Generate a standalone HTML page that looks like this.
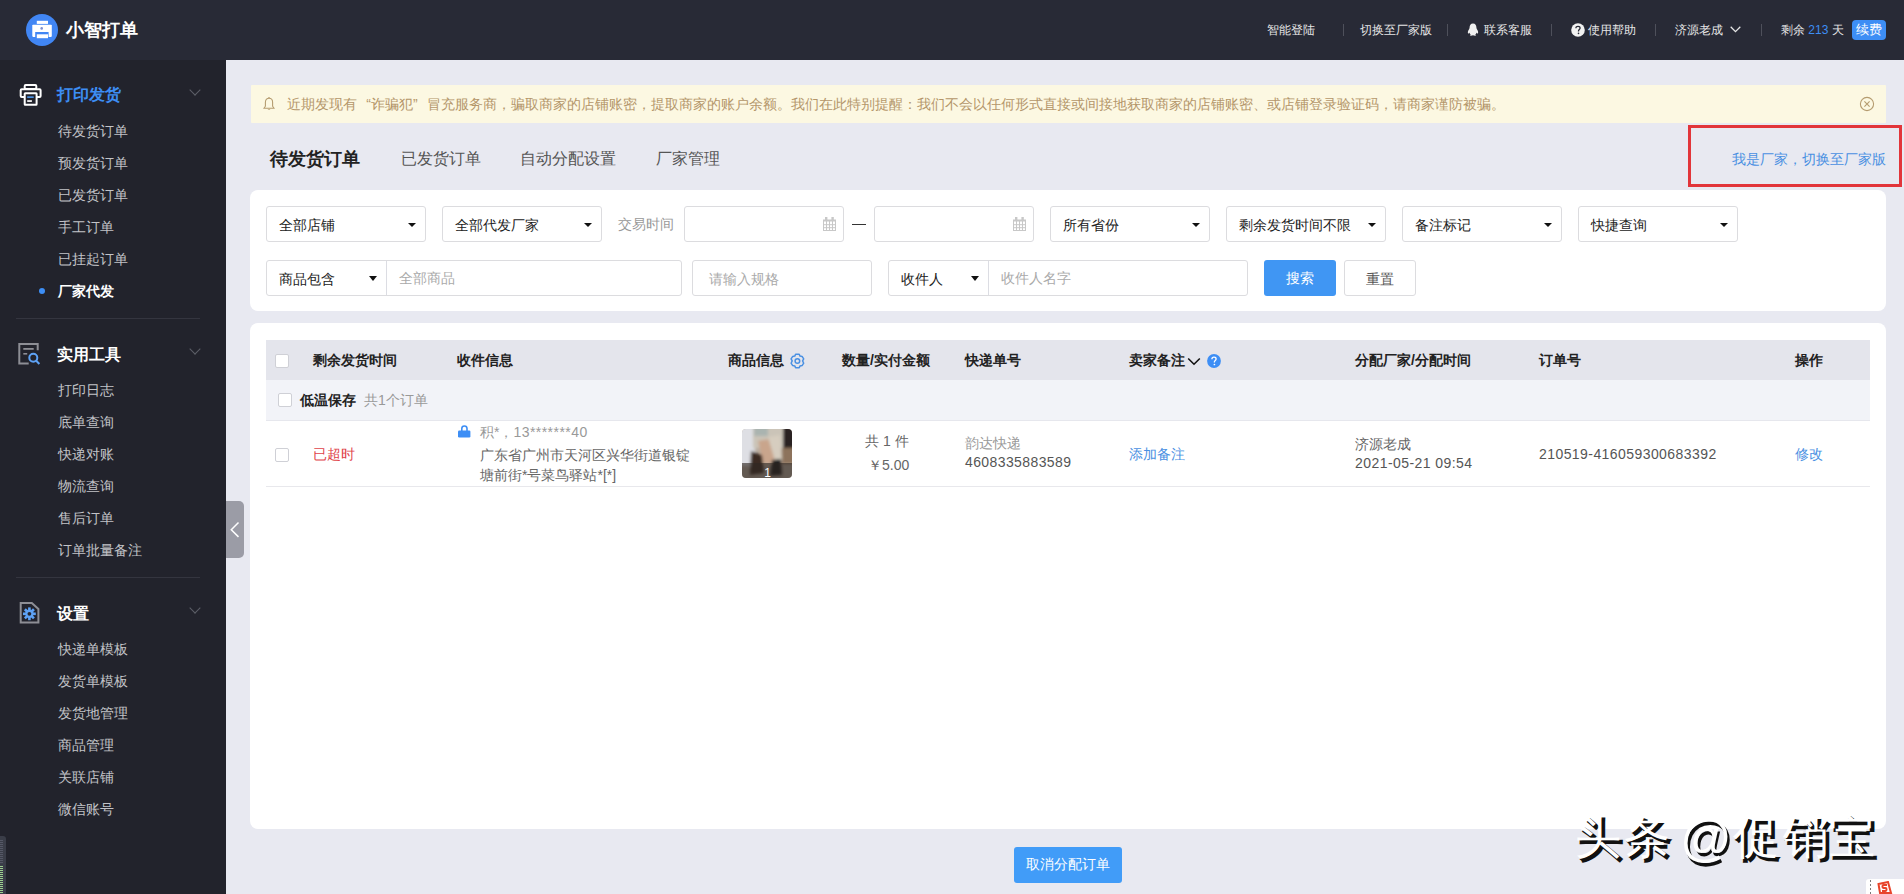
<!DOCTYPE html>
<html><head><meta charset="utf-8">
<style>
*{margin:0;padding:0;box-sizing:border-box}
html,body{width:1904px;height:894px;overflow:hidden}
body{font-family:"Liberation Sans",sans-serif;background:#e8e9f1;position:relative;font-size:14px;color:#333}
.a{position:absolute;white-space:nowrap;line-height:1}
#hdr{position:absolute;left:0;top:0;width:1904px;height:60px;background:#282a36}
#side{position:absolute;left:0;top:60px;width:226px;height:834px;background:#22232c}
.hi{color:#e6e6e6;font-size:12px}
.sep{position:absolute;width:1px;height:12px;background:#4e505b;top:24px}
.sub{color:#c2c3c8;font-size:14px;left:58px}
.sect{color:#fff;font-size:16px;font-weight:bold;left:57px}
.chev{position:absolute;left:191px;width:8px;height:8px;border-right:1.3px solid #5d5f69;border-bottom:1.3px solid #5d5f69;transform:rotate(45deg)}
.hline{position:absolute;left:16px;width:184px;height:1px;background:#34353f}
.card{position:absolute;background:#fff;border-radius:8px}
.sel{position:absolute;height:36px;border:1px solid #dcdcdf;border-radius:3px;background:#fff}
.sel span{position:absolute;left:12px;top:11px;font-size:14px;line-height:14px;color:#222}
.sel i{position:absolute;right:9px;top:16px;width:0;height:0;border-left:4.5px solid transparent;border-right:4.5px solid transparent;border-top:4.5px solid #111}
.ph{color:#a9a9a9}
.th{font-weight:bold;font-size:14px;color:#222}
.q{display:inline-block;width:14px;text-align-last:auto}
.cal{position:absolute;left:138px;top:10px;width:13px;height:14px;background:linear-gradient(90deg,#c8c8c8 1px,transparent 1px) 0 0/3.1px 100%,linear-gradient(#c8c8c8 1px,transparent 1px) 0 3px/100% 3.5px}
.wm{font-size:46px}
.cb{position:absolute;width:14px;height:14px;border:1px solid #cfd0d6;background:#fff;border-radius:2px}
</style></head><body>
<div id="hdr">
  <svg class="a" style="left:26px;top:14px" width="32" height="32" viewBox="0 0 32 32">
    <circle cx="16" cy="16" r="16" fill="#4186f4"></circle>
    <rect x="10.8" y="6.8" width="11.2" height="3.1" fill="#fff"></rect>
    <rect x="6.3" y="10.8" width="19.5" height="12.1" rx="0.8" fill="#fff"></rect>
    <rect x="9.2" y="18" width="13.4" height="6" fill="#4186f4"></rect>
    <rect x="10.8" y="20.3" width="11.2" height="3.9" fill="#fff"></rect>
    <circle cx="15.7" cy="14.4" r="1.3" fill="#7d8fd0"></circle>
  </svg>
  <div class="a" style="left: 66px; top: 21px; font-size: 18px; font-weight: bold; color: rgb(255, 255, 255); width: 72px; text-align-last: justify;">小智打单</div>
  <div class="a hi" style="left: 1267px; top: 24px; width: 48px; text-align-last: justify;">智能登陆</div>
  <div class="sep" style="left:1343px"></div>
  <div class="a hi" style="left: 1360px; top: 24px; width: 72px; text-align-last: justify;">切换至厂家版</div>
  <div class="sep" style="left:1447px"></div>
  <svg class="a" style="left:1467px;top:23px" width="12" height="13" viewBox="0 0 12 13">
    <path d="M6 0.5C3.6 0.5 2.6 2.4 2.6 4.4C2.6 5.2 2.2 6 1.6 7C0.8 8.3 0.6 9.8 1.2 10.4C1.6 10.8 2.2 10 2.5 9.4C2.7 10.6 3.3 11.3 3.9 11.7C2.9 12 2.6 12.5 3.2 12.6C4.4 12.8 5.4 12.4 6 12.2C6.6 12.4 7.6 12.8 8.8 12.6C9.4 12.5 9.1 12 8.1 11.7C8.7 11.3 9.3 10.6 9.5 9.4C9.8 10 10.4 10.8 10.8 10.4C11.4 9.8 11.2 8.3 10.4 7C9.8 6 9.4 5.2 9.4 4.4C9.4 2.4 8.4 0.5 6 0.5Z" fill="#f0f0f0"></path>
  </svg>
  <div class="a hi" style="left: 1484px; top: 24px; width: 48px; text-align-last: justify;">联系客服</div>
  <div class="sep" style="left:1551px"></div>
  <svg class="a" style="left:1571px;top:23px" width="14" height="14" viewBox="0 0 14 14">
    <circle cx="7" cy="7" r="6.8" fill="#f2f2f2"></circle>
    <path d="M4.9 5.3C4.9 4 5.8 3.3 7 3.3C8.2 3.3 9.1 4 9.1 5.1C9.1 6.4 7.5 6.6 7.5 7.9V8.4" stroke="#282a36" stroke-width="1.3" fill="none"></path>
    <circle cx="7.5" cy="10.4" r="0.8" fill="#282a36"></circle>
  </svg>
  <div class="a hi" style="left: 1588px; top: 24px; width: 48px; text-align-last: justify;">使用帮助</div>
  <div class="sep" style="left:1655px"></div>
  <div class="a hi" style="left: 1675px; top: 24px; width: 48px; text-align-last: justify;">济源老成</div>
  <svg class="a" style="left:1730px;top:26px" width="11" height="7" viewBox="0 0 11 7"><path d="M0.7 0.8L5.5 5.6L10.3 0.8" stroke="#e6e6e6" stroke-width="1.3" fill="none"></path></svg>
  <div class="sep" style="left:1761px"></div>
  <div class="a hi" style="left: 1781px; top: 24px; width: 62.72px; text-align-last: justify;">剩余 <span style="color:#3d8ef5">213</span> 天</div>
  <div class="a" style="left:1852px;top:20px;width:34px;height:20px;border-radius:4px;background:#3d8ef5;color:#fff;font-size:13px;line-height:20px;text-align:center">续费</div>
</div>
<div id="side">
  <svg class="a" style="left:14px;top:20px" width="32" height="32" viewBox="0 0 32 32">
    <rect x="10.7" y="4.9" width="11.6" height="4.2" rx="1" fill="none" stroke="#fff" stroke-width="2"></rect>
    <rect x="6.7" y="9.2" width="19.9" height="7.7" rx="1" fill="#22232c" stroke="#fff" stroke-width="2"></rect>
    <rect x="10.7" y="13.2" width="11.9" height="11.6" rx="0.5" fill="#22232c" stroke="#fff" stroke-width="2"></rect>
    <rect x="13.2" y="16.3" width="6.5" height="1.7" fill="#4a90e2"></rect>
    <rect x="13.2" y="20.2" width="4.7" height="1.7" fill="#fff"></rect>
  </svg>
  <div class="a sect" style="top: 27px; color: rgb(61, 142, 245); width: 64px; text-align-last: justify;">打印发货</div>
  <div class="chev" style="top:26px"></div>
  <div class="a sub" style="top: 64px; width: 70px; text-align-last: justify;">待发货订单</div>
  <div class="a sub" style="top: 96px; width: 70px; text-align-last: justify;">预发货订单</div>
  <div class="a sub" style="top: 128px; width: 70px; text-align-last: justify;">已发货订单</div>
  <div class="a sub" style="top: 160px; width: 56px; text-align-last: justify;">手工订单</div>
  <div class="a sub" style="top: 192px; width: 70px; text-align-last: justify;">已挂起订单</div>
  <div class="a" style="left:39px;top:228px;width:6px;height:6px;border-radius:50%;background:#3d8ef5"></div>
  <div class="a sub" style="top: 224px; color: rgb(255, 255, 255); font-weight: bold; width: 56px; text-align-last: justify;">厂家代发</div>
  <div class="hline" style="top:258px"></div>
  <svg class="a" style="left:14px;top:278px" width="32" height="32" viewBox="0 0 32 32">
    <path d="M14.7 25.5H5.3V6H23.7V12.2" fill="none" stroke="#8d8e95" stroke-width="2"></path>
    <rect x="9.3" y="10" width="10.4" height="1.8" fill="#8d8e95"></rect>
    <rect x="9.3" y="15" width="3.9" height="1.6" fill="#8d8e95"></rect>
    <circle cx="19.3" cy="19.7" r="4" fill="none" stroke="#5ea2f5" stroke-width="2"></circle>
    <path d="M22.2 22.8L25.4 26" stroke="#5ea2f5" stroke-width="2"></path>
  </svg>
  <div class="a sect" style="top: 287px; width: 64px; text-align-last: justify;">实用工具</div>
  <div class="chev" style="top:285px"></div>
  <div class="a sub" style="top: 323px; width: 56px; text-align-last: justify;">打印日志</div>
  <div class="a sub" style="top: 355px; width: 56px; text-align-last: justify;">底单查询</div>
  <div class="a sub" style="top: 387px; width: 56px; text-align-last: justify;">快递对账</div>
  <div class="a sub" style="top: 419px; width: 56px; text-align-last: justify;">物流查询</div>
  <div class="a sub" style="top: 451px; width: 56px; text-align-last: justify;">售后订单</div>
  <div class="a sub" style="top: 483px; width: 84px; text-align-last: justify;">订单批量备注</div>
  <div class="hline" style="top:517px"></div>
  <svg class="a" style="left:14px;top:537px" width="32" height="32" viewBox="0 0 32 32">
    <path d="M6.7 6H17.8L24.4 12V25.5H6.7Z" fill="none" stroke="#8d8e95" stroke-width="2"></path>
    <g fill="#5ea2f5" transform="translate(15.4 16.8)">
      <circle r="4.2"></circle>
      <rect x="-1.3" y="-6.4" width="2.6" height="12.8"></rect>
      <rect x="-1.3" y="-6.4" width="2.6" height="12.8" transform="rotate(45)"></rect>
      <rect x="-1.3" y="-6.4" width="2.6" height="12.8" transform="rotate(90)"></rect>
      <rect x="-1.3" y="-6.4" width="2.6" height="12.8" transform="rotate(135)"></rect>
      <circle r="1.9" fill="#22232c"></circle>
    </g>
  </svg>
  <div class="a sect" style="top: 546px; width: 32px; text-align-last: justify;">设置</div>
  <div class="chev" style="top:544px"></div>
  <div class="a sub" style="top: 582px; width: 70px; text-align-last: justify;">快递单模板</div>
  <div class="a sub" style="top: 614px; width: 70px; text-align-last: justify;">发货单模板</div>
  <div class="a sub" style="top: 646px; width: 70px; text-align-last: justify;">发货地管理</div>
  <div class="a sub" style="top: 678px; width: 56px; text-align-last: justify;">商品管理</div>
  <div class="a sub" style="top: 710px; width: 56px; text-align-last: justify;">关联店铺</div>
  <div class="a sub" style="top: 742px; width: 56px; text-align-last: justify;">微信账号</div>
</div>
<!-- collapse tab -->
<div class="a" style="left:226px;top:501px;width:18px;height:57px;background:#9b9ca6;border-radius:0 5px 5px 0"></div>
<svg class="a" style="left:229px;top:521px" width="12" height="18" viewBox="0 0 12 18"><path d="M9.5 1.5L2.3 8.7L9.5 15.9" stroke="#fff" stroke-width="1.5" fill="none"></path></svg>
<!-- bottom-left widget -->
<div class="a" style="left:0;top:836px;width:6px;height:58px;background:#3a3d48;border-radius:0 3px 0 0"></div>
<div class="a" style="left:0;top:840px;width:3px;height:24px;background:repeating-linear-gradient(#555866 0 1px,#3a3d48 1px 2px)"></div>
<div class="a" style="left:0;top:866px;width:3px;height:28px;background:repeating-linear-gradient(#9ccf8f 0 1px,#3a3d48 1px 2px)"></div>

<!-- notice -->
<div class="a" style="left:251px;top:85px;width:1635px;height:38px;background:#fcf8e2;border-radius:1px"></div>
<svg class="a" style="left:263px;top:97px" width="12" height="14" viewBox="0 0 12 14">
  <path d="M6 1.2C3.7 1.2 2.4 2.9 2.4 5.2V9.2L1 11.2H11L9.6 9.2V5.2C9.6 2.9 8.3 1.2 6 1.2Z" fill="none" stroke="#b59c70" stroke-width="1.1"></path>
  <path d="M4.6 12.2C4.9 13.2 7.1 13.2 7.4 12.2Z" fill="#b59c70"></path>
  <rect x="5.4" y="0" width="1.2" height="1.5" fill="#b59c70"></rect>
</svg>
<div class="a" style="left: 287px; top: 97px; font-size: 14px; color: rgb(180, 150, 106); width: 1218px; text-align-last: justify;">近期发现有<span class="q" style="text-align:right">“</span>诈骗犯<span class="q">”</span>冒充服务商，骗取商家的店铺账密，提取商家的账户余额。我们在此特别提醒：我们不会以任何形式直接或间接地获取商家的店铺账密、或店铺登录验证码，请商家谨防被骗。</div>
<svg class="a" style="left:1859px;top:96px" width="16" height="16" viewBox="0 0 16 16">
  <circle cx="8" cy="8" r="6.6" fill="none" stroke="#b59c70" stroke-width="1.1"></circle>
  <path d="M5.4 5.4L10.6 10.6M10.6 5.4L5.4 10.6" stroke="#b59c70" stroke-width="1.1"></path>
</svg>

<!-- tabs -->
<div class="a" style="left: 270px; top: 150px; font-size: 18px; font-weight: bold; color: rgb(34, 34, 34); width: 90px; text-align-last: justify;">待发货订单</div>
<div class="a" style="left: 401px; top: 151px; font-size: 16px; color: rgb(85, 85, 85); width: 80px; text-align-last: justify;">已发货订单</div>
<div class="a" style="left: 520px; top: 151px; font-size: 16px; color: rgb(85, 85, 85); width: 96px; text-align-last: justify;">自动分配设置</div>
<div class="a" style="left: 656px; top: 151px; font-size: 16px; color: rgb(85, 85, 85); width: 64px; text-align-last: justify;">厂家管理</div>
<div class="a" style="left: 1732px; top: 152px; font-size: 14px; color: rgb(74, 144, 226); width: 154px; text-align-last: justify;">我是厂家，切换至厂家版</div>
<div class="a" style="left:1688px;top:125px;width:214px;height:62px;border:3px solid #e2353a"></div>

<!-- filter card -->
<div class="card" style="left:250px;top:190px;width:1636px;height:121px"></div>
<div class="sel" style="left:266px;top:206px;width:160px"><span style="width: 56px; text-align-last: justify;">全部店铺</span><i></i></div>
<div class="sel" style="left:442px;top:206px;width:160px"><span style="width: 84px; text-align-last: justify;">全部代发厂家</span><i></i></div>
<div class="a" style="left: 618px; top: 217px; font-size: 14px; color: rgb(153, 153, 153); width: 56px; text-align-last: justify;">交易时间</div>
<div class="sel" style="left:684px;top:206px;width:160px"><svg style="position:absolute;left:138px;top:10px" width="13" height="14" viewBox="0 0 13 14"><g fill="#c8c8c8"><rect x="2" y="0" width="2.4" height="3"></rect><rect x="8.4" y="0" width="2.4" height="3"></rect><rect x="0" y="2.5" width="13" height="2"></rect><rect x="0" y="4" width="1" height="10"></rect><rect x="3" y="4" width="1" height="10"></rect><rect x="6" y="4" width="1" height="10"></rect><rect x="9" y="4" width="1" height="10"></rect><rect x="12" y="4" width="1" height="10"></rect><rect x="0" y="7.2" width="13" height="1"></rect><rect x="0" y="10.2" width="13" height="1"></rect><rect x="0" y="13" width="13" height="1"></rect></g></svg></div>
<div class="a" style="left:852px;top:224px;width:14px;height:1px;background:#333"></div>
<div class="sel" style="left:874px;top:206px;width:160px"><svg style="position:absolute;left:138px;top:10px" width="13" height="14" viewBox="0 0 13 14"><g fill="#c8c8c8"><rect x="2" y="0" width="2.4" height="3"></rect><rect x="8.4" y="0" width="2.4" height="3"></rect><rect x="0" y="2.5" width="13" height="2"></rect><rect x="0" y="4" width="1" height="10"></rect><rect x="3" y="4" width="1" height="10"></rect><rect x="6" y="4" width="1" height="10"></rect><rect x="9" y="4" width="1" height="10"></rect><rect x="12" y="4" width="1" height="10"></rect><rect x="0" y="7.2" width="13" height="1"></rect><rect x="0" y="10.2" width="13" height="1"></rect><rect x="0" y="13" width="13" height="1"></rect></g></svg></div>
<div class="sel" style="left:1050px;top:206px;width:160px"><span style="width: 56px; text-align-last: justify;">所有省份</span><i></i></div>
<div class="sel" style="left:1226px;top:206px;width:160px"><span style="width: 112px; text-align-last: justify;">剩余发货时间不限</span><i></i></div>
<div class="sel" style="left:1402px;top:206px;width:160px"><span style="width: 56px; text-align-last: justify;">备注标记</span><i></i></div>
<div class="sel" style="left:1578px;top:206px;width:160px"><span style="width: 56px; text-align-last: justify;">快捷查询</span><i></i></div>

<div class="sel" style="left:266px;top:260px;width:416px"><span style="width: 56px; text-align-last: justify;">商品包含</span></div>
<div class="a" style="left:386px;top:261px;width:1px;height:34px;background:#dcdde3"></div>
<div class="a" style="left:369px;top:276px;width:0;height:0;border-left:4.5px solid transparent;border-right:4.5px solid transparent;border-top:5px solid #111"></div>
<div class="a" style="left: 399px; top: 271px; color: rgb(170, 170, 170); width: 56px; text-align-last: justify;">全部商品</div>
<div class="sel" style="left:692px;top:260px;width:180px"><span style="left: 16px; color: rgb(170, 170, 170); width: 70px; text-align-last: justify;">请输入规格</span></div>
<div class="sel" style="left:888px;top:260px;width:360px"><span style="width: 42px; text-align-last: justify;">收件人</span></div>
<div class="a" style="left:988px;top:261px;width:1px;height:34px;background:#dcdde3"></div>
<div class="a" style="left:971px;top:276px;width:0;height:0;border-left:4.5px solid transparent;border-right:4.5px solid transparent;border-top:5px solid #111"></div>
<div class="a" style="left: 1001px; top: 271px; color: rgb(170, 170, 170); width: 70px; text-align-last: justify;">收件人名字</div>
<div class="a" style="left:1264px;top:260px;width:72px;height:36px;background:#4096f3;border-radius:3px;color:#fff;font-size:14px;line-height:36px;text-align:center">搜索</div>
<div class="sel" style="left:1344px;top:260px;width:72px"><span style="left: 21px; color: rgb(85, 85, 85); width: 28px; text-align-last: justify;">重置</span></div>

<!-- table card -->
<div class="card" style="left:250px;top:323px;width:1636px;height:506px"></div>
<div class="a" style="left:266px;top:340px;width:1604px;height:40px;background:#e4e5ec"></div>
<div class="a" style="left:266px;top:380px;width:1604px;height:40px;background:#f2f3f8"></div>
<div class="a" style="left:266px;top:420px;width:1604px;height:1px;background:#e6e7ed"></div>
<div class="a" style="left:266px;top:486px;width:1604px;height:1px;background:#e8e8ec"></div>
<div class="cb" style="left:275px;top:354px"></div>
<div class="a th" style="left: 313px; top: 353px; width: 84px; text-align-last: justify;">剩余发货时间</div>
<div class="a th" style="left: 457px; top: 353px; width: 56px; text-align-last: justify;">收件信息</div>
<div class="a th" style="left: 728px; top: 353px; width: 56px; text-align-last: justify;">商品信息</div>
<svg class="a" style="left:789px;top:353px" width="17" height="16" viewBox="0 0 17 16">
  <path d="M6.6 1.2H10.2L11 3.1L13.1 3.4L14.7 5.8L13.6 7.9L14.7 10.2L13.1 12.6L11 12.9L10.2 14.8H6.6L5.8 12.9L3.7 12.6L2.1 10.2L3.2 7.9L2.1 5.8L3.7 3.4L5.8 3.1Z" fill="none" stroke="#4a90e2" stroke-width="1.5" stroke-linejoin="round"></path>
  <circle cx="8.4" cy="8" r="2.3" fill="none" stroke="#4a90e2" stroke-width="1.5"></circle>
</svg>
<div class="a th" style="left: 842px; top: 353px; width: 87.9px; text-align-last: justify;">数量/实付金额</div>
<div class="a th" style="left: 965px; top: 353px; width: 56px; text-align-last: justify;">快递单号</div>
<div class="a th" style="left: 1129px; top: 353px; width: 56px; text-align-last: justify;">卖家备注</div>
<svg class="a" style="left:1187px;top:357px" width="14" height="9" viewBox="0 0 14 9"><path d="M1.2 1.5L7 7.2L12.8 1.5" stroke="#111" stroke-width="1.6" fill="none"></path></svg>
<svg class="a" style="left:1207px;top:354px" width="14" height="14" viewBox="0 0 14 14">
  <circle cx="7" cy="7" r="6.9" fill="#3d8ef5"></circle>
  <path d="M4.9 5.2C4.9 3.9 5.8 3.2 7 3.2C8.2 3.2 9.1 3.9 9.1 5C9.1 6.3 7.4 6.5 7.4 7.8V8.5" stroke="#fff" stroke-width="1.3" fill="none"></path>
  <circle cx="7.4" cy="10.5" r="0.85" fill="#fff"></circle>
</svg>
<div class="a th" style="left: 1355px; top: 353px; width: 115.9px; text-align-last: justify;">分配厂家/分配时间</div>
<div class="a th" style="left: 1539px; top: 353px; width: 42px; text-align-last: justify;">订单号</div>
<div class="a th" style="left: 1795px; top: 353px; width: 28px; text-align-last: justify;">操作</div>

<div class="cb" style="left:278px;top:393px"></div>
<div class="a th" style="left: 300px; top: 393px; width: 56px; text-align-last: justify;">低温保存</div>
<div class="a" style="left: 364px; top: 393px; color: rgb(153, 153, 153); width: 63.8px; text-align-last: justify;">共1个订单</div>

<div class="cb" style="left:275px;top:448px"></div>
<div class="a" style="left: 313px; top: 447px; color: rgb(224, 67, 74); width: 42px; text-align-last: justify;">已超时</div>
<svg class="a" style="left:458px;top:425px" width="13" height="13" viewBox="0 0 13 13">
  <path d="M3.8 6V3.6C3.8 1.9 4.9 1 6.4 1C7.9 1 9 1.9 9 3.6V6" fill="none" stroke="#3d8ef5" stroke-width="1.6"></path>
  <rect x="0" y="5.6" width="12.4" height="6.8" rx="1.2" fill="#3d8ef5"></rect>
</svg>
<div class="a" style="left: 480px; top: 425px; color: rgb(153, 153, 153); width: 107.69px; text-align-last: justify;">积*，<span style="letter-spacing:0.45px">13*******40</span></div>
<div class="a" style="left: 480px; top: 448px; color: rgb(102, 102, 102); width: 210px; text-align-last: justify;">广东省广州市天河区兴华街道银锭</div>
<div class="a" style="left: 480px; top: 468px; color: rgb(102, 102, 102); width: 136.13px; text-align-last: justify;">塘前街*号菜鸟驿站*[*]</div>
<svg class="a" style="left:742px;top:429px" width="50" height="49" viewBox="0 0 50 49">
  <defs><clipPath id="pc"><rect width="50" height="49" rx="4"></rect></clipPath>
  <filter id="bl" x="-10%" y="-10%" width="120%" height="120%"><feGaussianBlur stdDeviation="1.6"></feGaussianBlur></filter></defs>
  <g clip-path="url(#pc)">
    <rect width="50" height="49" fill="#b9ada0"></rect>
    <g filter="url(#bl)">
      <rect x="-3" y="-3" width="16" height="40" fill="#dedfe4"></rect>
      <rect x="11" y="-3" width="32" height="22" fill="#cbc4b8"></rect>
      <rect x="12" y="-3" width="14" height="10" fill="#aab4b0"></rect>
      <path d="M16 12L27 10L33 30L28 35L21 34Z" fill="#c9a58c"></path>
      <path d="M26 8L38 6L40 32L33 32Z" fill="#d6cdbf"></path>
      <path d="M9 22L20 26L22 44L8 46Z" fill="#3a2a24"></path>
      <path d="M30 31L39 30L40 46L28 47Z" fill="#1f1b1b"></path>
      <rect x="41" y="-3" width="12" height="22" fill="#2a2422"></rect>
      <rect x="40" y="19" width="13" height="16" fill="#8d735c"></rect>
    </g>
    <rect x="0" y="34" width="50" height="15" fill="#2e2622" opacity="0.62"></rect>
    <text x="25.5" y="47.5" font-size="12" fill="#fff" text-anchor="middle" style="font-family:'Liberation Sans'">1</text>
  </g>
</svg>
<div class="a" style="left: 865px; top: 434px; color: rgb(102, 102, 102); width: 43.58px; text-align-last: justify;">共 1 件</div>
<div class="a" style="left: 868px; top: 458px; color: rgb(102, 102, 102); width: 41.25px; text-align-last: justify;">￥5.00</div>
<div class="a" style="left: 965px; top: 436px; color: rgb(153, 153, 153); width: 56px; text-align-last: justify;">韵达快递</div>
<div class="a" style="left:965px;top:455px;color:#555;letter-spacing:0.4px">4608335883589</div>
<div class="a" style="left: 1129px; top: 447px; color: rgb(74, 144, 226); width: 56px; text-align-last: justify;">添加备注</div>
<div class="a" style="left: 1355px; top: 437px; color: rgb(102, 102, 102); width: 56px; text-align-last: justify;">济源老成</div>
<div class="a" style="left:1355px;top:456px;color:#555;letter-spacing:0.44px">2021-05-21 09:54</div>
<div class="a" style="left:1539px;top:447px;color:#555;letter-spacing:0.43px">210519-416059300683392</div>
<div class="a" style="left: 1795px; top: 447px; color: rgb(74, 144, 226); width: 28px; text-align-last: justify;">修改</div>

<!-- bottom -->
<div class="a" style="left:1014px;top:847px;width:108px;height:36px;background:#419cf8;border-radius:3px;color:#fff;font-size:14px;line-height:35px;text-align:center">取消分配订单</div>
<div class="a wm" style="left:1578px;top:817px;color:#111;font-weight:bold">头</div>
<div class="a wm" style="left:1627px;top:817px;color:#111;font-weight:bold">条</div>
<div class="a wm" style="left:1683px;top:816px;color:#111;font-weight:bold;font-size:51px">@</div>
<div class="a wm" style="left:1736px;top:817px;color:#111;font-weight:bold">促</div>
<div class="a wm" style="left:1786px;top:817px;color:#111;font-weight:bold">销</div>
<div class="a wm" style="left:1832px;top:817px;color:#111;font-weight:bold">宝</div>
<div class="a wm" style="left:1575px;top:814px;color:#fff;font-weight:normal">头</div>
<div class="a wm" style="left:1624px;top:814px;color:#fff;font-weight:normal">条</div>
<div class="a wm" style="left:1680px;top:813px;color:#fff;font-weight:normal;font-size:51px">@</div>
<div class="a wm" style="left:1733px;top:814px;color:#fff;font-weight:normal">促</div>
<div class="a wm" style="left:1783px;top:814px;color:#fff;font-weight:normal">销</div>
<div class="a wm" style="left:1829px;top:814px;color:#fff;font-weight:normal">宝</div>
<div class="a" style="left:1866px;top:879px;width:40px;height:16px;background:#fff;border-radius:3px 0 0 0"></div>
<div class="a" style="left:1870px;top:880px;width:1px;height:14px;background:repeating-linear-gradient(#777 0 2px,#fff 2px 4px)"></div>
<svg class="a" style="left:1877px;top:881px" width="16" height="13" viewBox="0 0 16 13"><path d="M1.5 3L11 1L14 12H3Z" fill="none" stroke="#e8452c" stroke-width="2"></path><path d="M10 4H6.5C5 4 5 7 6.5 7H8.5C10 7 10 10 8.5 10H5" fill="none" stroke="#e8452c" stroke-width="1.8"></path></svg>

</body></html>
